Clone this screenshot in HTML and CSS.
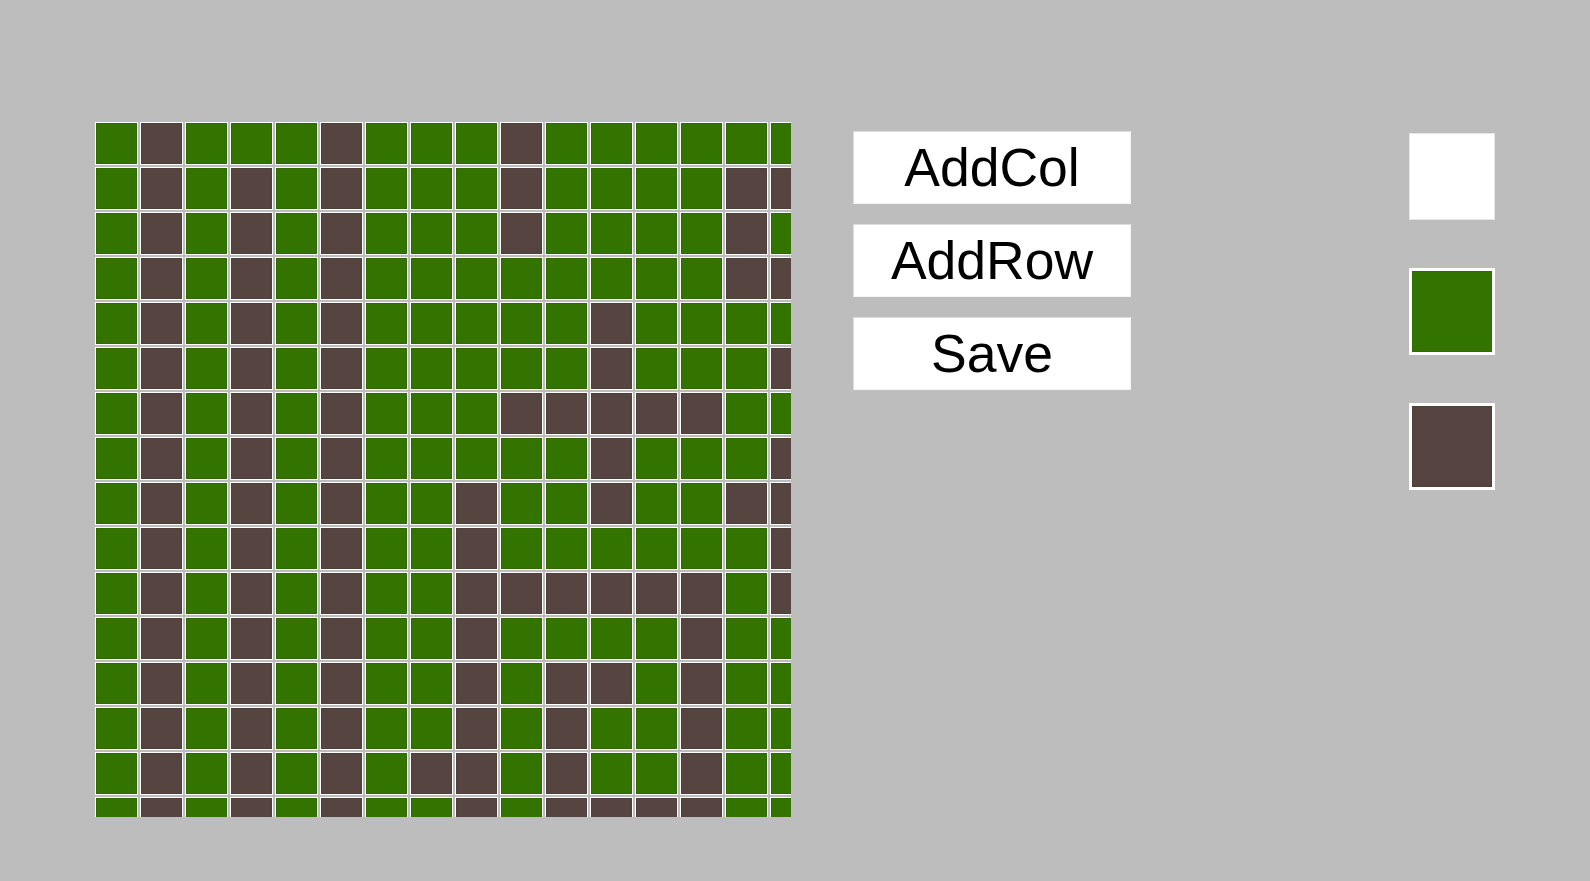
FILE: index.html
```html
<!DOCTYPE html>
<html>
<head>
<meta charset="utf-8">
<title>Pixel Art</title>
<link rel="stylesheet" href="styles.css">
</head>
<body>
<div class="app">
  <div class="canvas">
    <div class="grid">
      <div class="c g"></div><div class="c b"></div><div class="c g"></div><div class="c g"></div><div class="c g"></div><div class="c b"></div><div class="c g"></div><div class="c g"></div><div class="c g"></div><div class="c b"></div><div class="c g"></div><div class="c g"></div><div class="c g"></div><div class="c g"></div><div class="c g"></div><div class="c g"></div>
      <div class="c g"></div><div class="c b"></div><div class="c g"></div><div class="c b"></div><div class="c g"></div><div class="c b"></div><div class="c g"></div><div class="c g"></div><div class="c g"></div><div class="c b"></div><div class="c g"></div><div class="c g"></div><div class="c g"></div><div class="c g"></div><div class="c b"></div><div class="c b"></div>
      <div class="c g"></div><div class="c b"></div><div class="c g"></div><div class="c b"></div><div class="c g"></div><div class="c b"></div><div class="c g"></div><div class="c g"></div><div class="c g"></div><div class="c b"></div><div class="c g"></div><div class="c g"></div><div class="c g"></div><div class="c g"></div><div class="c b"></div><div class="c g"></div>
      <div class="c g"></div><div class="c b"></div><div class="c g"></div><div class="c b"></div><div class="c g"></div><div class="c b"></div><div class="c g"></div><div class="c g"></div><div class="c g"></div><div class="c g"></div><div class="c g"></div><div class="c g"></div><div class="c g"></div><div class="c g"></div><div class="c b"></div><div class="c b"></div>
      <div class="c g"></div><div class="c b"></div><div class="c g"></div><div class="c b"></div><div class="c g"></div><div class="c b"></div><div class="c g"></div><div class="c g"></div><div class="c g"></div><div class="c g"></div><div class="c g"></div><div class="c b"></div><div class="c g"></div><div class="c g"></div><div class="c g"></div><div class="c g"></div>
      <div class="c g"></div><div class="c b"></div><div class="c g"></div><div class="c b"></div><div class="c g"></div><div class="c b"></div><div class="c g"></div><div class="c g"></div><div class="c g"></div><div class="c g"></div><div class="c g"></div><div class="c b"></div><div class="c g"></div><div class="c g"></div><div class="c g"></div><div class="c b"></div>
      <div class="c g"></div><div class="c b"></div><div class="c g"></div><div class="c b"></div><div class="c g"></div><div class="c b"></div><div class="c g"></div><div class="c g"></div><div class="c g"></div><div class="c b"></div><div class="c b"></div><div class="c b"></div><div class="c b"></div><div class="c b"></div><div class="c g"></div><div class="c g"></div>
      <div class="c g"></div><div class="c b"></div><div class="c g"></div><div class="c b"></div><div class="c g"></div><div class="c b"></div><div class="c g"></div><div class="c g"></div><div class="c g"></div><div class="c g"></div><div class="c g"></div><div class="c b"></div><div class="c g"></div><div class="c g"></div><div class="c g"></div><div class="c b"></div>
      <div class="c g"></div><div class="c b"></div><div class="c g"></div><div class="c b"></div><div class="c g"></div><div class="c b"></div><div class="c g"></div><div class="c g"></div><div class="c b"></div><div class="c g"></div><div class="c g"></div><div class="c b"></div><div class="c g"></div><div class="c g"></div><div class="c b"></div><div class="c b"></div>
      <div class="c g"></div><div class="c b"></div><div class="c g"></div><div class="c b"></div><div class="c g"></div><div class="c b"></div><div class="c g"></div><div class="c g"></div><div class="c b"></div><div class="c g"></div><div class="c g"></div><div class="c g"></div><div class="c g"></div><div class="c g"></div><div class="c g"></div><div class="c b"></div>
      <div class="c g"></div><div class="c b"></div><div class="c g"></div><div class="c b"></div><div class="c g"></div><div class="c b"></div><div class="c g"></div><div class="c g"></div><div class="c b"></div><div class="c b"></div><div class="c b"></div><div class="c b"></div><div class="c b"></div><div class="c b"></div><div class="c g"></div><div class="c b"></div>
      <div class="c g"></div><div class="c b"></div><div class="c g"></div><div class="c b"></div><div class="c g"></div><div class="c b"></div><div class="c g"></div><div class="c g"></div><div class="c b"></div><div class="c g"></div><div class="c g"></div><div class="c g"></div><div class="c g"></div><div class="c b"></div><div class="c g"></div><div class="c g"></div>
      <div class="c g"></div><div class="c b"></div><div class="c g"></div><div class="c b"></div><div class="c g"></div><div class="c b"></div><div class="c g"></div><div class="c g"></div><div class="c b"></div><div class="c g"></div><div class="c b"></div><div class="c b"></div><div class="c g"></div><div class="c b"></div><div class="c g"></div><div class="c g"></div>
      <div class="c g"></div><div class="c b"></div><div class="c g"></div><div class="c b"></div><div class="c g"></div><div class="c b"></div><div class="c g"></div><div class="c g"></div><div class="c b"></div><div class="c g"></div><div class="c b"></div><div class="c g"></div><div class="c g"></div><div class="c b"></div><div class="c g"></div><div class="c g"></div>
      <div class="c g"></div><div class="c b"></div><div class="c g"></div><div class="c b"></div><div class="c g"></div><div class="c b"></div><div class="c g"></div><div class="c b"></div><div class="c b"></div><div class="c g"></div><div class="c b"></div><div class="c g"></div><div class="c g"></div><div class="c b"></div><div class="c g"></div><div class="c g"></div>
      <div class="c g"></div><div class="c b"></div><div class="c g"></div><div class="c b"></div><div class="c g"></div><div class="c b"></div><div class="c g"></div><div class="c g"></div><div class="c b"></div><div class="c g"></div><div class="c b"></div><div class="c b"></div><div class="c b"></div><div class="c b"></div><div class="c g"></div><div class="c g"></div>
    </div>
  </div>
  <div class="controls">
    <button class="btn">AddCol</button>
    <button class="btn">AddRow</button>
    <button class="btn">Save</button>
  </div>
  <div class="palette">
    <div class="swatch white"></div>
    <div class="swatch green"></div>
    <div class="swatch brown"></div>
  </div>
</div>
</body>
</html>
```
FILE: styles.css
```css
html, body {
  margin: 0;
  padding: 0;
}
body {
  background: #bdbdbd;
  font-family: "Liberation Sans", Arial, sans-serif;
  width: 1590px;
  height: 881px;
  overflow: hidden;
}
.app {
  display: flex;
  align-items: flex-start;
  padding-left: 95px;
}
.canvas {
  margin-top: 122px;
  width: 696px;
  height: 695px;
  overflow: hidden;
  flex: none;
}
.grid {
  display: grid;
  grid-template-columns: repeat(16, 43px);
  grid-auto-rows: 43px;
  gap: 2px;
  width: 718px;
}
.c {
  box-sizing: border-box;
  border: 1px solid #fff;
  box-shadow: inset 0 0 0 1px rgba(0, 0, 0, 0.07);
}
.g { background: #337300; }
.b { background: #564440; }

.controls {
  margin-top: 131px;
  margin-left: 62px;
  display: flex;
  flex-direction: column;
  gap: 20px;
  flex: none;
}
.btn {
  box-sizing: border-box;
  width: 278px;
  height: 73px;
  background: #fff;
  border: 1px solid #dcdcdc;
  border-right-color: #f4f4f4;
  border-bottom-color: #f4f4f4;
  font-family: "Liberation Sans", Arial, sans-serif;
  font-size: 53.5px;
  color: #000;
  padding: 0;
  line-height: 1;
}

.palette {
  margin-top: 133px;
  margin-left: 278px;
  display: flex;
  flex-direction: column;
  gap: 48px;
  flex: none;
}
.swatch {
  box-sizing: border-box;
  width: 86px;
  height: 87px;
  border: 3px solid #fff;
  box-shadow: inset 0 0 0 1px rgba(0, 0, 0, 0.06);
}
.swatch.white {
  border: 1px solid #e6e6e6;
  background: #fff;
  box-shadow: none;
}
.swatch.green { background: #337300; }
.swatch.brown { background: #564440; }
```
